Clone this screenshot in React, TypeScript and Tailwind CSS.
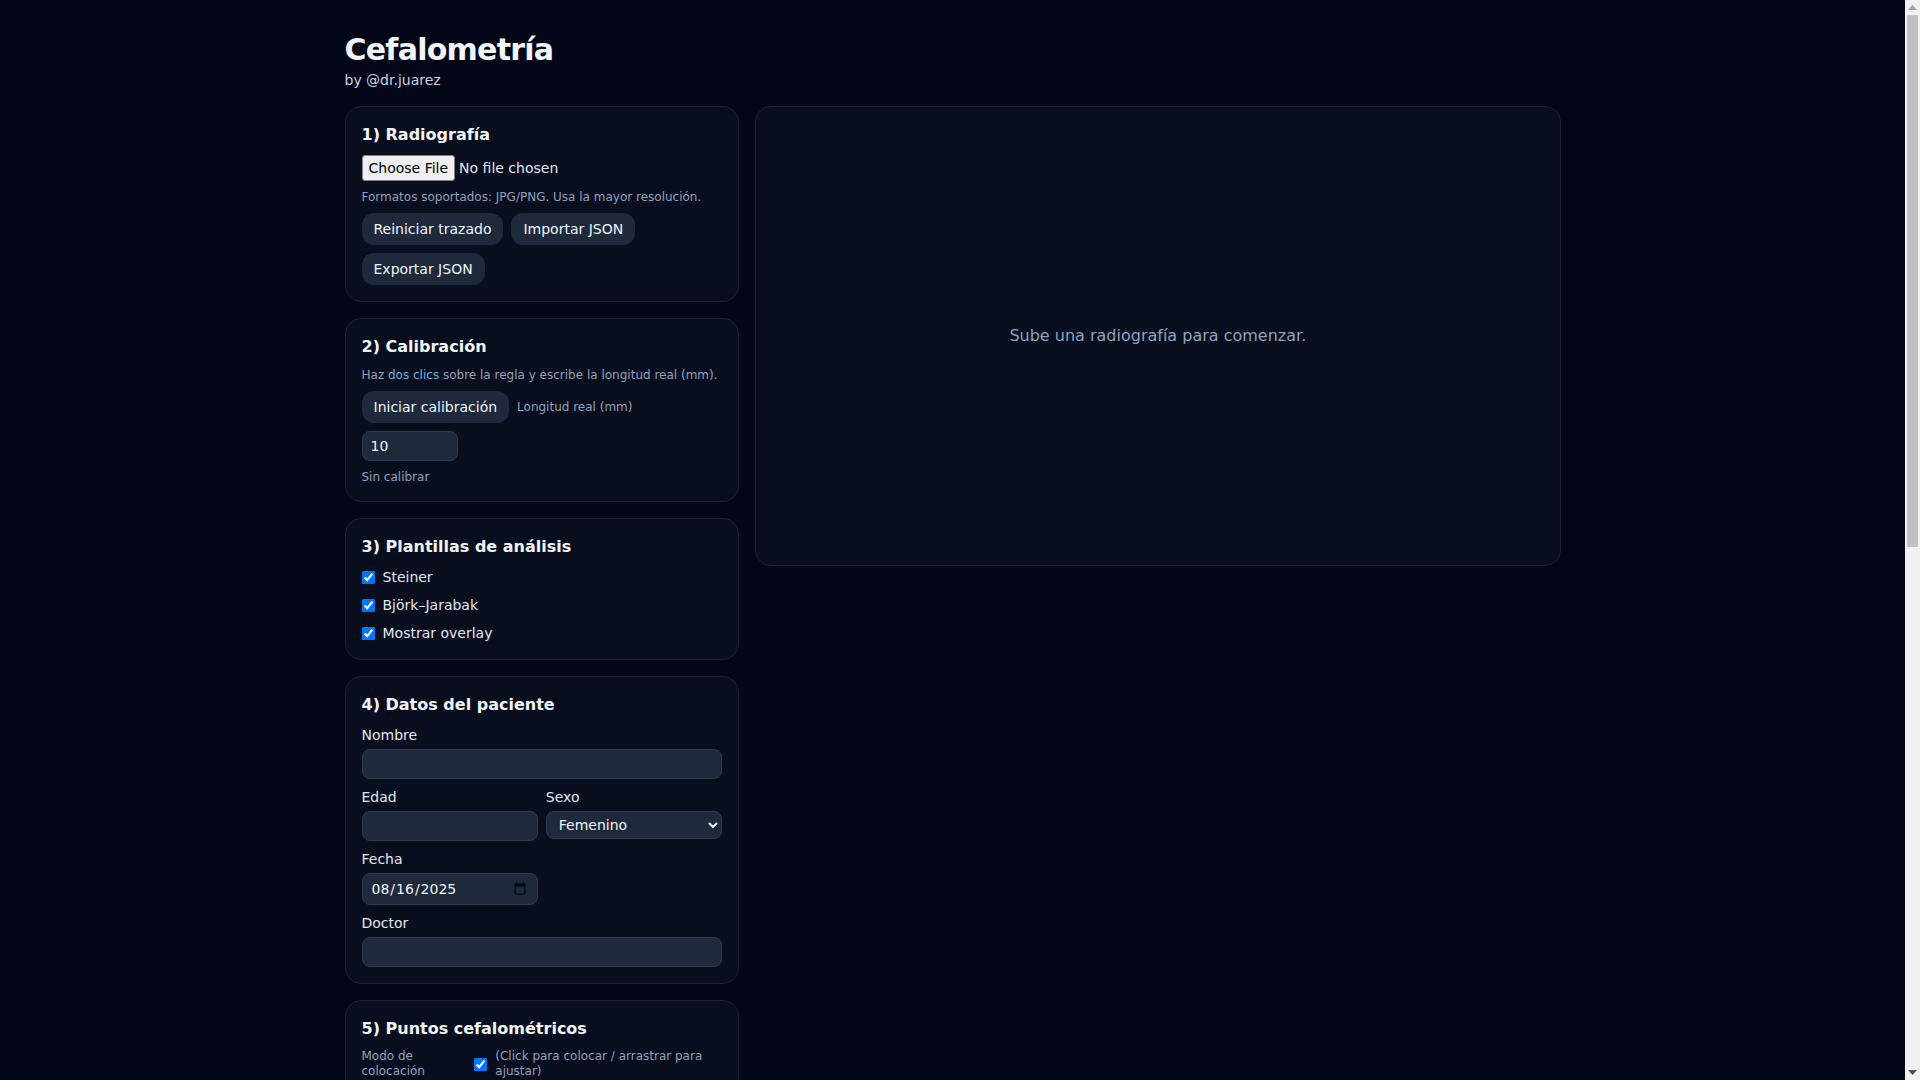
import React from "react";

const card = "rounded-2xl border border-[#1a2234] bg-[#090e1f] p-4 flex flex-col gap-2";
const btn = "rounded-xl bg-[#1e293b] px-3 py-1.5 text-sm text-slate-100";
const inp = "rounded-lg border border-[#2e3a4e] bg-[#1e293b] px-2 py-1 text-sm text-slate-100 outline-none";

const puntos = [
  ["S", "Silla"],
  ["N", "Nasion"],
  ["A", "Punto A"],
  ["B", "Punto B"],
  ["Pog", "Pogonion"],
  ["Gn", "Gnation"],
  ["Me", "Mentón"],
  ["Go", "Gonion"],
  ["Ar", "Articular"],
  ["Ba", "Basion"],
  ["Po", "Porion"],
  ["Or", "Orbitario"],
  ["ENA", "Espina nasal anterior"],
  ["ENP", "Espina nasal posterior"],
  ["Is", "Incisal superior"],
  ["Ii", "Incisal inferior"],
  ["Ls", "Labio superior"],
  ["Li", "Labio inferior"],
];

function Field({ label, children }: { label: string; children: React.ReactNode }) {
  return (
    <label className="flex flex-col gap-1 text-sm text-slate-200">
      <span>{label}</span>
      {children}
    </label>
  );
}

function Scrollbar() {
  return (
    <div className="flex h-screen w-[15px] shrink-0 flex-col bg-[#f1f1f1]">
      <div className="flex h-[15px] items-center justify-center">
        <svg width="9" height="5" viewBox="0 0 9 5">
          <path d="M0 5 L4.5 0 L9 5 Z" fill="#a3a3a3" />
        </svg>
      </div>
      <div className="flex flex-1 flex-col px-[2px]">
        <div className="h-[532px] rounded-[1px] bg-[#c1c1c1]" />
      </div>
      <div className="flex h-[15px] items-center justify-center">
        <svg width="9" height="5" viewBox="0 0 9 5">
          <path d="M0 0 L4.5 5 L9 0 Z" fill="#505050" />
        </svg>
      </div>
    </div>
  );
}

export default function App() {
  return (
    <div className="flex h-screen overflow-hidden bg-[#030617] text-slate-100 font-['DejaVu_Sans',sans-serif]">
      <div className="flex-1 overflow-y-auto [scrollbar-width:none]">
        <div className="mx-auto max-w-7xl px-8 py-8">
          <h1 className="text-3xl font-bold tracking-tight text-slate-100">Cefalometría</h1>
          <p className="mt-0.5 text-sm text-slate-300">by @dr.juarez</p>

          <div className="mt-4 grid grid-cols-12 items-start gap-4">
            <div className="col-span-4 flex flex-col gap-4">
              <section className={card}>
                <h2 className="text-base font-bold text-slate-100">1) Radiografía</h2>
                <div>
                  <input
                    type="file"
                    accept="image/png,image/jpeg"
                    className="text-sm text-slate-200 file:mr-1 file:rounded-[3px] file:border file:border-[#858585] file:bg-[#efefef] file:px-[6px] file:py-[2px] file:text-black"
                  />
                </div>
                <p className="text-xs text-slate-400">Formatos soportados: JPG/PNG. Usa la mayor resolución.</p>
                <div className="flex flex-wrap gap-2">
                  <button className={btn}>Reiniciar trazado</button>
                  <button className={btn}>Importar JSON</button>
                  <button className={btn}>Exportar JSON</button>
                </div>
              </section>

              <section className={card}>
                <h2 className="text-base font-bold text-slate-100">2) Calibración</h2>
                <p className="text-xs text-slate-400">
                  Haz <span className="text-[#5cb6e4]">dos clics</span> sobre la regla y escribe la longitud real (mm).
                </p>
                <div className="flex flex-wrap items-center gap-2">
                  <button className={btn}>Iniciar calibración</button>
                  <label className="text-xs text-slate-400">Longitud real (mm)</label>
                  <input type="number" defaultValue={10} className={inp + " w-24"} />
                </div>
                <p className="text-xs text-slate-400">Sin calibrar</p>
              </section>

              <section className={card}>
                <h2 className="text-base font-bold text-slate-100">3) Plantillas de análisis</h2>
                <label className="flex items-center gap-2 text-sm text-slate-200">
                  <input type="checkbox" defaultChecked />
                  Steiner
                </label>
                <label className="flex items-center gap-2 text-sm text-slate-200">
                  <input type="checkbox" defaultChecked />
                  Björk–Jarabak
                </label>
                <label className="flex items-center gap-2 text-sm text-slate-200">
                  <input type="checkbox" defaultChecked />
                  Mostrar overlay
                </label>
              </section>

              <section className={card}>
                <h2 className="text-base font-bold text-slate-100">4) Datos del paciente</h2>
                <Field label="Nombre">
                  <input type="text" className={inp + " w-full"} />
                </Field>
                <div className="grid grid-cols-2 gap-2">
                  <Field label="Edad">
                    <input type="number" className={inp + " w-full"} />
                  </Field>
                  <Field label="Sexo">
                    <select className={inp + " w-full"} defaultValue="F">
                      <option value="F">Femenino</option>
                      <option value="M">Masculino</option>
                    </select>
                  </Field>
                </div>
                <div className="grid grid-cols-2 gap-2">
                  <Field label="Fecha">
                    <input type="date" defaultValue="2025-08-16" className={inp + " h-[32px] w-full"} />
                  </Field>
                </div>
                <Field label="Doctor">
                  <input type="text" className={inp + " w-full"} />
                </Field>
              </section>

              <section className={card}>
                <h2 className="text-base font-bold text-slate-100">5) Puntos cefalométricos</h2>
                <div className="flex items-center gap-2 text-xs leading-tight text-slate-400">
                  <span>Modo de colocación</span>
                  <input type="checkbox" defaultChecked />
                  <span>(Click para colocar / arrastrar para ajustar)</span>
                </div>
                <div className="flex flex-col gap-2">
                  {puntos.map(([k, n]) => (
                    <div key={k} className="flex items-center justify-between text-sm text-slate-200">
                      <span>
                        <span className="font-bold">{k}</span> — {n}
                      </span>
                      <span className="text-xs text-slate-400">pendiente</span>
                    </div>
                  ))}
                </div>
                <div className="flex flex-wrap gap-2">
                  <button className={btn}>Punto anterior</button>
                  <button className={btn}>Siguiente punto</button>
                </div>
              </section>

              <section className={card}>
                <h2 className="text-base font-bold text-slate-100">6) Resultados</h2>
                <p className="text-xs text-slate-400">Coloca los puntos para calcular las mediciones.</p>
                <div className="flex flex-col gap-2">
                  {["SNA", "SNB", "ANB", "SN-GoGn", "Eje Y", "Ángulo goníaco", "Suma de Björk", "Índice de Jarabak", "1-NA", "1-NB", "Ángulo interincisal"].map((m) => (
                    <div key={m} className="flex items-center justify-between text-sm text-slate-200">
                      <span>{m}</span>
                      <span className="text-slate-400">—</span>
                    </div>
                  ))}
                </div>
                <div className="flex flex-wrap gap-2">
                  <button className={btn}>Generar informe PDF</button>
                </div>
              </section>
            </div>

            <div className="col-span-8">
              <div className="flex h-[460px] items-center justify-center rounded-2xl border border-[#1a2234] bg-[#090e1f]">
                <p className="text-base text-slate-400">Sube una radiografía para comenzar.</p>
              </div>
            </div>
          </div>
        </div>
      </div>
      <Scrollbar />
    </div>
  );
}
